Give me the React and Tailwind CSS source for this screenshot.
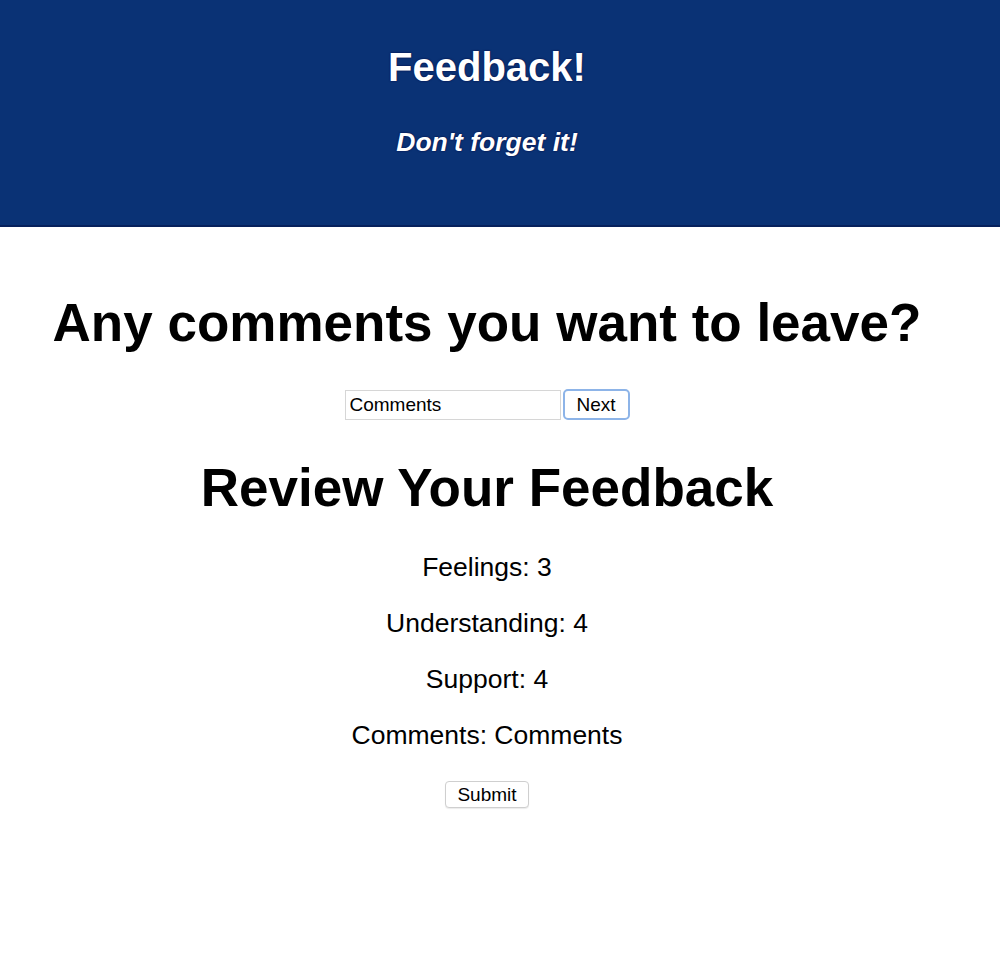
export default function App() {
  return (
    <div className="min-h-[962px] bg-white font-['Liberation_Sans',Arial,sans-serif] text-black">
      <header className="h-[227px] bg-[#0a3275] border-b-2 border-[#07215c] flex flex-col items-center pt-[44px] pr-[26px]">
        <h1 className="text-[40px] leading-[46px] font-bold text-white [text-shadow:0_0_2px_#00003a]">Feedback!</h1>
        <h2 className="mt-[37px] text-[26.5px] leading-[30px] font-bold italic text-white [text-shadow:0_0_2px_#00003a]">Don't forget it!</h2>
      </header>
      <main className="flex flex-col items-center pr-[26px]">
        <h1 className="mt-[65px] text-[53px] leading-[61px] font-bold">Any comments you want to leave?</h1>
        <div className="mt-[36px] flex items-center">
          <input
            type="text"
            defaultValue="Comments"
            className="w-[216px] h-[30px] border border-[#d6d6d6] px-[4px] text-[19px] text-black outline-none"
          />
          <button className="ml-[2px] w-[67px] h-[31px] rounded-[5px] border-2 border-[#8db4e8] bg-white text-[19px] leading-none">Next</button>
        </div>
        <h1 className="mt-[37px] text-[53px] leading-[61px] font-bold">Review Your Feedback</h1>
        <div className="mt-[34px] flex flex-col items-center gap-[26px] text-[26.5px] leading-[30px]">
          <p>Feelings: 3</p>
          <p>Understanding: 4</p>
          <p>Support: 4</p>
          <p>Comments: Comments</p>
        </div>
        <button className="mt-[31px] w-[84px] h-[27px] rounded-[4px] border border-[#cfcfcf] bg-white text-[19px] leading-none shadow-[0_1px_1px_rgba(0,0,0,0.08)]">Submit</button>
      </main>
    </div>
  );
}
